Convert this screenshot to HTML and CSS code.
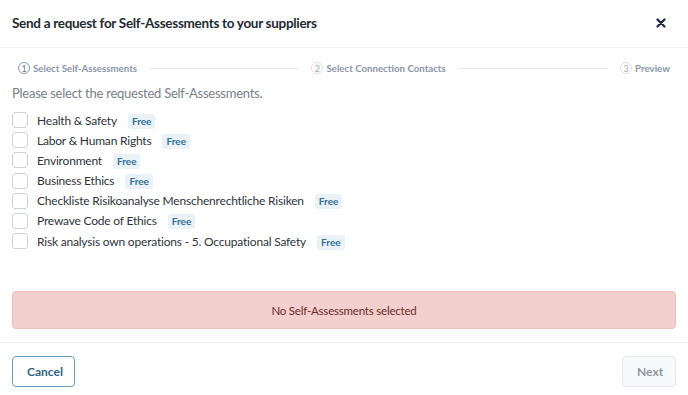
FILE: index.html
```html
<!DOCTYPE html>
<html lang="en">
<head>
<meta charset="utf-8">
<title>Send a request</title>
<link rel="stylesheet" href="styles.css">
</head>
<body>
<div class="modal">
  <header class="modal-header">
    <h1 class="modal-title">Send a request for Self-Assessments to your suppliers</h1>
    <button class="close" aria-label="Close">
      <svg width="10" height="10" viewBox="0 0 10 10"><path d="M1.5 1.5 L8.5 8.5 M8.5 1.5 L1.5 8.5" stroke="#1c2340" stroke-width="2.2" stroke-linecap="round"/></svg>
    </button>
  </header>
  <div class="modal-body">
    <ol class="stepper">
      <li class="step active"><span class="step-num">1</span><span class="step-label">Select Self-Assessments</span></li>
      <li class="step-line"></li>
      <li class="step"><span class="step-num">2</span><span class="step-label">Select Connection Contacts</span></li>
      <li class="step-line"></li>
      <li class="step"><span class="step-num">3</span><span class="step-label">Preview</span></li>
    </ol>
    <p class="hint">Please select the requested Self-Assessments.</p>
    <ul class="options">
      <li class="option"><span class="checkbox"></span><span class="option-label">Health &amp; Safety</span><span class="badge">Free</span></li>
      <li class="option"><span class="checkbox"></span><span class="option-label">Labor &amp; Human Rights</span><span class="badge">Free</span></li>
      <li class="option"><span class="checkbox"></span><span class="option-label">Environment</span><span class="badge">Free</span></li>
      <li class="option"><span class="checkbox"></span><span class="option-label">Business Ethics</span><span class="badge">Free</span></li>
      <li class="option"><span class="checkbox"></span><span class="option-label">Checkliste Risikoanalyse Menschenrechtliche Risiken</span><span class="badge">Free</span></li>
      <li class="option"><span class="checkbox"></span><span class="option-label">Prewave Code of Ethics</span><span class="badge">Free</span></li>
      <li class="option"><span class="checkbox"></span><span class="option-label">Risk analysis own operations - 5. Occupational Safety</span><span class="badge">Free</span></li>
    </ul>
    <div class="alert">No Self-Assessments selected</div>
  </div>
  <footer class="modal-footer">
    <button class="btn btn-outline">Cancel</button>
    <button class="btn btn-disabled">Next</button>
  </footer>
</div>
</body>
</html>
```

FILE: styles.css
```css
* { box-sizing: border-box; }
html, body { margin: 0; padding: 0; background: #fff; }
body {
  font-family: Lato, "Open Sans", sans-serif;
  color: #2b2f36;
}
.modal { width: 688px; height: 395px; display: flex; flex-direction: column; }
.modal-header {
  height: 48px;
  padding: 0 20px 0 12px;
  display: flex;
  align-items: center;
  justify-content: space-between;
  border-bottom: 1px solid #f1f3f6;
}
.modal-title {
  margin: 0;
  font-size: 13.5px;
  letter-spacing: -0.3px;
  font-weight: 700;
  color: #232a33;
  padding-bottom: 1px;
}
.close {
  border: 0; background: none; padding: 0; width: 14px; height: 14px;
  display: flex; align-items: center; justify-content: center;
  margin-bottom: 1px;
}
.modal-body { padding: 11px 12px 13px; }
.stepper {
  list-style: none; margin: 0; padding: 0 6px 0 6px;
  display: flex; align-items: center; height: 18px;
}
.step { display: flex; align-items: center; gap: 3px; color: #8a96a8; font-size: 9.7px; font-weight: 700; }
.step-num {
  width: 12px; height: 12px; border-radius: 50%;
  border: 1px solid #d9dee5;
  font-size: 9px; font-weight: 400;
  display: flex; align-items: center; justify-content: center;
  color: #a2abb8;
}
.step.active .step-num { border-color: #8a96a8; color: #6f7c8f; }
.step-line { flex: 1; height: 1px; background: #e6ebf1; margin: 0 12px; }
.hint {
  margin: 6px 0 7px;
  font-size: 13px;
  letter-spacing: -0.25px;
  line-height: 20px;
  color: #7a7f87;
}
.options { list-style: none; margin: 0; padding: 0; }
.option { display: flex; align-items: center; height: 20.17px; }
.checkbox {
  width: 16px; height: 16px;
  border: 1px solid #cfd4db;
  border-radius: 3px;
  background: #fff;
  margin-right: 9px;
  flex: none;
}
.option-label { font-size: 12px; letter-spacing: -0.2px; color: #2f343b; }
.badge {
  margin-left: 11px;
  margin-top: 2px;
  background: #eaf2f8;
  color: #2f6f9a;
  font-size: 10px;
  font-weight: 700;
  padding: 2px 4px;
  border-radius: 3px;
  line-height: 11px;
}
.alert {
  margin-top: 40px;
  height: 38px;
  background: #f3cfcd;
  border: 1px solid #efbfbd;
  border-radius: 4px;
  color: #6a2b2b;
  font-size: 11.5px;
  letter-spacing: -0.2px;
  display: flex; align-items: center; justify-content: center;
}
.modal-footer {
  border-top: 1px solid #f1f3f6;
  padding: 13px 12px 0;
  display: flex; justify-content: space-between; align-items: flex-start;
}
.btn {
  height: 31px;
  border-radius: 4px;
  font-family: inherit;
  font-size: 12px;
  font-weight: 700;
  padding: 0 14px;
}
.btn-outline { background: #fff; border: 1px solid #6b9bbb; color: #2f6588; width: 63px; }
.btn-disabled { background: #f8f9fa; border: 1px solid #e6e8eb; color: #8e97a3; width: 54px; }
```
